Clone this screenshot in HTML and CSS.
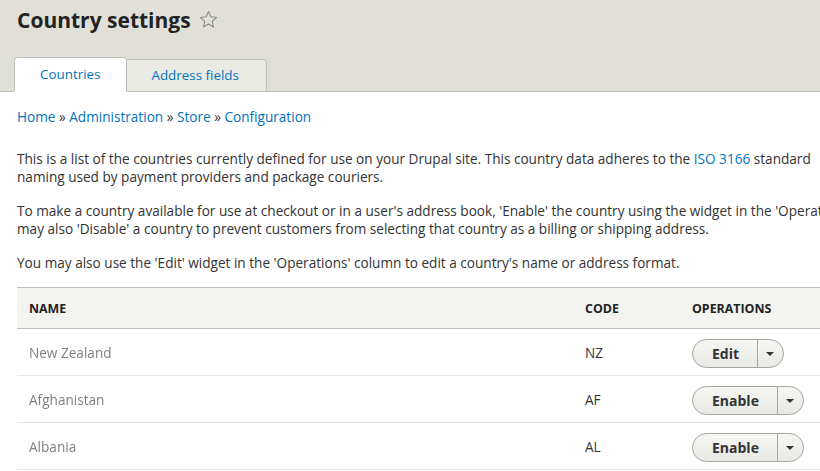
FILE: index.html
```html
<!DOCTYPE html>
<html lang="en">
<head>
<meta charset="utf-8">
<title>Country settings</title>
<link rel="stylesheet" href="styles.css">
</head>
<body>
<div class="page">
  <header class="page-header">
    <h1 class="title">Country settings <span class="star"><svg width="19" height="19" viewBox="0 0 20 20"><path d="M10 1.6l2.5 5.6 6.1.6-4.6 4.1 1.3 6-5.3-3.1-5.3 3.1 1.3-6L1.4 7.8l6.1-.6z" fill="none" stroke="#8a8a84" stroke-width="1.1" stroke-linejoin="round"/></svg></span></h1>
    <nav class="tabs">
      <a class="tab active" href="#">Countries</a>
      <a class="tab" href="#">Address fields</a>
    </nav>
  </header>
  <main class="content">
    <div class="breadcrumb"><a href="#">Home</a> » <a href="#">Administration</a> » <a href="#">Store</a> » <a href="#">Configuration</a></div>
    <p>This is a list of the countries currently defined for use on your Drupal site. This country data adheres to the <a href="#">ISO 3166</a> standard<br>naming used by payment providers and package couriers.</p>
    <p>To make a country available for use at checkout or in a user's address book, 'Enable' the country using the widget in the 'Operations' column. You<br>may also 'Disable' a country to prevent customers from selecting that country as a billing or shipping address.</p>
    <p>You may also use the 'Edit' widget in the 'Operations' column to edit a country's name or address format.</p>
    <table class="countries">
      <thead>
        <tr><th class="c-name">Name</th><th class="c-code">Code</th><th class="c-ops">Operations</th></tr>
      </thead>
      <tbody>
        <tr><td class="c-name"><span class="blur">New Zealand</span></td><td class="c-code">NZ</td><td class="c-ops"><div class="dropbutton"><span class="db-main">Edit</span><span class="db-toggle"></span></div></td></tr>
        <tr><td class="c-name"><span class="blur">Afghanistan</span></td><td class="c-code">AF</td><td class="c-ops"><div class="dropbutton"><span class="db-main">Enable</span><span class="db-toggle"></span></div></td></tr>
        <tr><td class="c-name"><span class="blur">Albania</span></td><td class="c-code">AL</td><td class="c-ops"><div class="dropbutton"><span class="db-main">Enable</span><span class="db-toggle"></span></div></td></tr>
      </tbody>
    </table>
  </main>
</div>
</body>
</html>
```
FILE: styles.css
```css
html, body {
  margin: 0;
  padding: 0;
  overflow: hidden;
  background: #fff;
}
body {
  font-family: "Open Sans", "Noto Sans", sans-serif;
  font-size: 13.6px;
  color: #333;
}
a { color: #0074bd; text-decoration: none; }
.page { width: 1200px; }
.page-header {
  background: #e0e0d8;
  border-bottom: 1px solid #bfbfba;
  padding: 0 0 0 17px;
  height: 92px;
  box-sizing: border-box;
  display: flex;
  flex-direction: column;
}
.title {
  margin: 0;
  padding-top: 5px;
  font-size: 21px;
  font-weight: 700;
  color: #232323;
  line-height: 30px;
  display: flex;
  align-items: center;
}
.star { margin-left: 8px; display: inline-flex; margin-top: -2px; }
.tabs {
  margin-top: auto;
  margin-left: -3px;
  display: flex;
  align-items: flex-end;
  margin-bottom: -1px;
}
.tab {
  display: block;
  height: 33px;
  line-height: 31px;
  padding: 0 26px 0 25px;
  background: #eaeae5;
  border: 1px solid #bfbfba;
  border-radius: 4px 4px 0 0;
  font-size: 13.4px;
  box-sizing: border-box;
}
.tab.active {
  background: #fff;
  border-bottom-color: #fff;
  height: 35px;
  line-height: 32px;
}
.tab + .tab { border-left: 0; border-radius: 0 4px 0 0; padding: 0 27px 0 24px; }
.content { padding: 0 0 0 17px; }
.breadcrumb { margin-top: 16px; line-height: 18px; }
p { margin: 0; line-height: 18px; }
.breadcrumb + p { margin-top: 24px; }
p + p { margin-top: 16px; }
.countries {
  margin-top: 15px;
  border-collapse: collapse;
  width: 1100px;
}
.countries th {
  background: #f3f3ef;
  border-top: 1px solid #bfbfba;
  border-bottom: 1px solid #bfbfba;
  text-align: left;
  text-transform: uppercase;
  font-size: 12.4px;
  font-weight: 700;
  color: #222;
  height: 40px;
  padding: 0 12px;
}
.countries td {
  height: 46px;
  padding: 0 12px;
  border-bottom: 1px solid #e6e4df;
  vertical-align: middle;
}
.c-name { width: 532px; }
.c-code { width: 83px; }
.blur { color: #808080; filter: blur(0.7px); }
.dropbutton {
  display: inline-flex;
  height: 29px;
  box-sizing: border-box;
  border: 1px solid #a6a6a0;
  border-radius: 15px;
  background: linear-gradient(#f6f6f3, #e8e8e4);
  margin-top: 2px;
}
.db-main {
  padding: 0 18px 0 19px;
  line-height: 27px;
  font-weight: 700;
  font-size: 14px;
  color: #333;
  border-right: 1px solid #a6a6a0;
}
.db-toggle {
  width: 25px;
  position: relative;
}
.db-toggle::after {
  content: "";
  position: absolute;
  left: 8px;
  top: 12px;
  border-left: 4px solid transparent;
  border-right: 4px solid transparent;
  border-top: 4px solid #333;
}
```
